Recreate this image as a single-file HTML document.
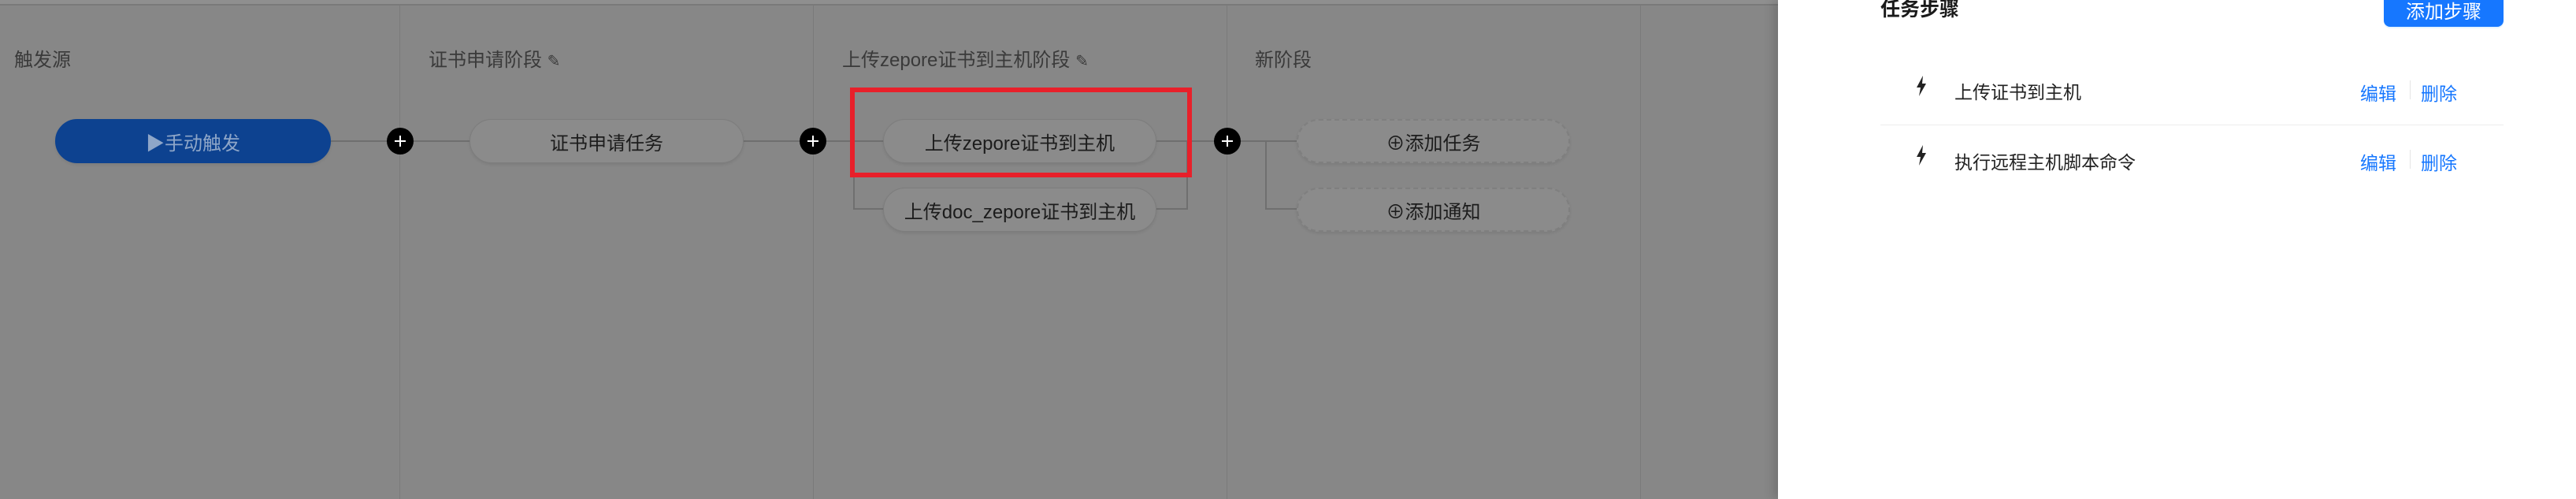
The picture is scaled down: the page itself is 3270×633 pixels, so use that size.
<!DOCTYPE html>
<html><head><meta charset="utf-8"><style>
*{margin:0;padding:0;box-sizing:border-box}
body{width:3270px;height:633px;position:relative;overflow:hidden;background:#878787;font-family:"Liberation Sans","Noto Sans CJK SC",sans-serif}
.a{position:absolute}
.hd{font-size:24px;color:#3a3a3a;top:56px;white-space:nowrap}
.vl{width:1px;background:#7a7a7a;top:5px;height:628px}
.pill{height:56px;border-radius:28px;background:#8b8b8b;border:1.5px solid #7d7d7d;display:flex;align-items:center;justify-content:center;font-size:24px;color:#1c1c1c;white-space:nowrap;box-shadow:0 2px 3px rgba(0,0,0,.08)}
.dash{border:2px dashed #7f7f7f}
.plus{width:34px;height:34px;border-radius:50%;background:#000;top:162px}
.plus:before{content:"";position:absolute;left:10px;top:16px;width:14px;height:2px;background:#fff}
.plus:after{content:"";position:absolute;left:16px;top:10px;width:2px;height:14px;background:#fff}
.ln{background:#6f6f6f}
.row{font-size:23px;color:#222}
.lk{font-size:23px;color:#1677ff}
</style></head><body>
<div class="a" style="left:0;top:0;width:2257px;height:5px;background:#8f8f8f"></div>
<div class="a ln" style="left:0;top:5px;width:2257px;height:2px;background:#7a7a7a"></div>
<div class="a vl" style="left:507px"></div>
<div class="a vl" style="left:1032px"></div>
<div class="a vl" style="left:1557px"></div>
<div class="a vl" style="left:2082px"></div>

<div class="a hd" style="left:18px">触发源</div>
<div class="a hd" style="left:544px">证书申请阶段 <span style="font-size:20px">✎</span></div>
<div class="a hd" style="left:1069px">上传zepore证书到主机阶段 <span style="font-size:20px">✎</span></div>
<div class="a hd" style="left:1593px">新阶段</div>

<!-- lines -->
<div class="a ln" style="left:420px;top:178px;width:1226px;height:2px"></div>
<div class="a ln" style="left:1083px;top:225px;width:2px;height:41px"></div>
<div class="a ln" style="left:1083px;top:264px;width:40px;height:2px"></div>
<div class="a ln" style="left:1468px;top:264px;width:40px;height:2px"></div>
<div class="a ln" style="left:1506px;top:179px;width:2px;height:87px"></div>
<div class="a ln" style="left:1606px;top:179px;width:2px;height:87px"></div>
<div class="a ln" style="left:1606px;top:264px;width:40px;height:2px"></div>

<div class="a pill" style="left:70px;top:151px;width:350px;background:#0d4290;border-color:#0d4290;color:#8ea6c8">▶手动触发</div>
<div class="a pill" style="left:596px;top:151px;width:348px">证书申请任务</div>
<div class="a pill" style="left:1121px;top:151px;width:347px">上传zepore证书到主机</div>
<div class="a pill" style="left:1121px;top:238px;width:347px">上传doc_zepore证书到主机</div>
<div class="a pill dash" style="left:1646px;top:151px;width:347px">⊕添加任务</div>
<div class="a pill dash" style="left:1646px;top:238px;width:347px">⊕添加通知</div>

<div class="a" style="left:1079px;top:111px;width:434px;height:114px;border:6px solid #e8202a"></div>

<div class="a plus" style="left:491px"></div>
<div class="a plus" style="left:1015px"></div>
<div class="a plus" style="left:1541px"></div>

<!-- panel -->
<div class="a" style="left:2257px;top:0;width:1013px;height:633px;background:#fff;box-shadow:-6px 0 12px rgba(0,0,0,.15)"></div>
<div class="a" style="left:2387px;top:-8px;font-size:25px;font-weight:bold;color:#1a1a1a">任务步骤</div>
<div class="a" style="left:3026px;top:-10px;width:152px;height:44px;border-radius:8px;background:#1677ff;color:#fff;font-size:24px;display:flex;align-items:center;justify-content:center;box-shadow:0 2px 0 rgba(5,145,255,.1)">添加步骤</div>

<svg class="a" style="left:2432px;top:96px" width="14" height="26" viewBox="0 0 14 26"><path d="M9 0 L1 15 H6 L4 26 L13 10 H8 Z" fill="#222"/></svg>
<div class="a row" style="left:2481px;top:98px">上传证书到主机</div>
<div class="a lk" style="left:2996px;top:100px">编辑</div>
<div class="a" style="left:3059px;top:102px;width:1px;height:24px;background:#e5e5e5"></div>
<div class="a lk" style="left:3073px;top:100px">删除</div>
<div class="a" style="left:2387px;top:158px;width:791px;height:1px;background:#ececec"></div>
<svg class="a" style="left:2432px;top:184px" width="14" height="26" viewBox="0 0 14 26"><path d="M9 0 L1 15 H6 L4 26 L13 10 H8 Z" fill="#222"/></svg>
<div class="a row" style="left:2481px;top:187px">执行远程主机脚本命令</div>
<div class="a lk" style="left:2996px;top:188px">编辑</div>
<div class="a" style="left:3059px;top:190px;width:1px;height:24px;background:#e5e5e5"></div>
<div class="a lk" style="left:3073px;top:188px">删除</div>
</body></html>
